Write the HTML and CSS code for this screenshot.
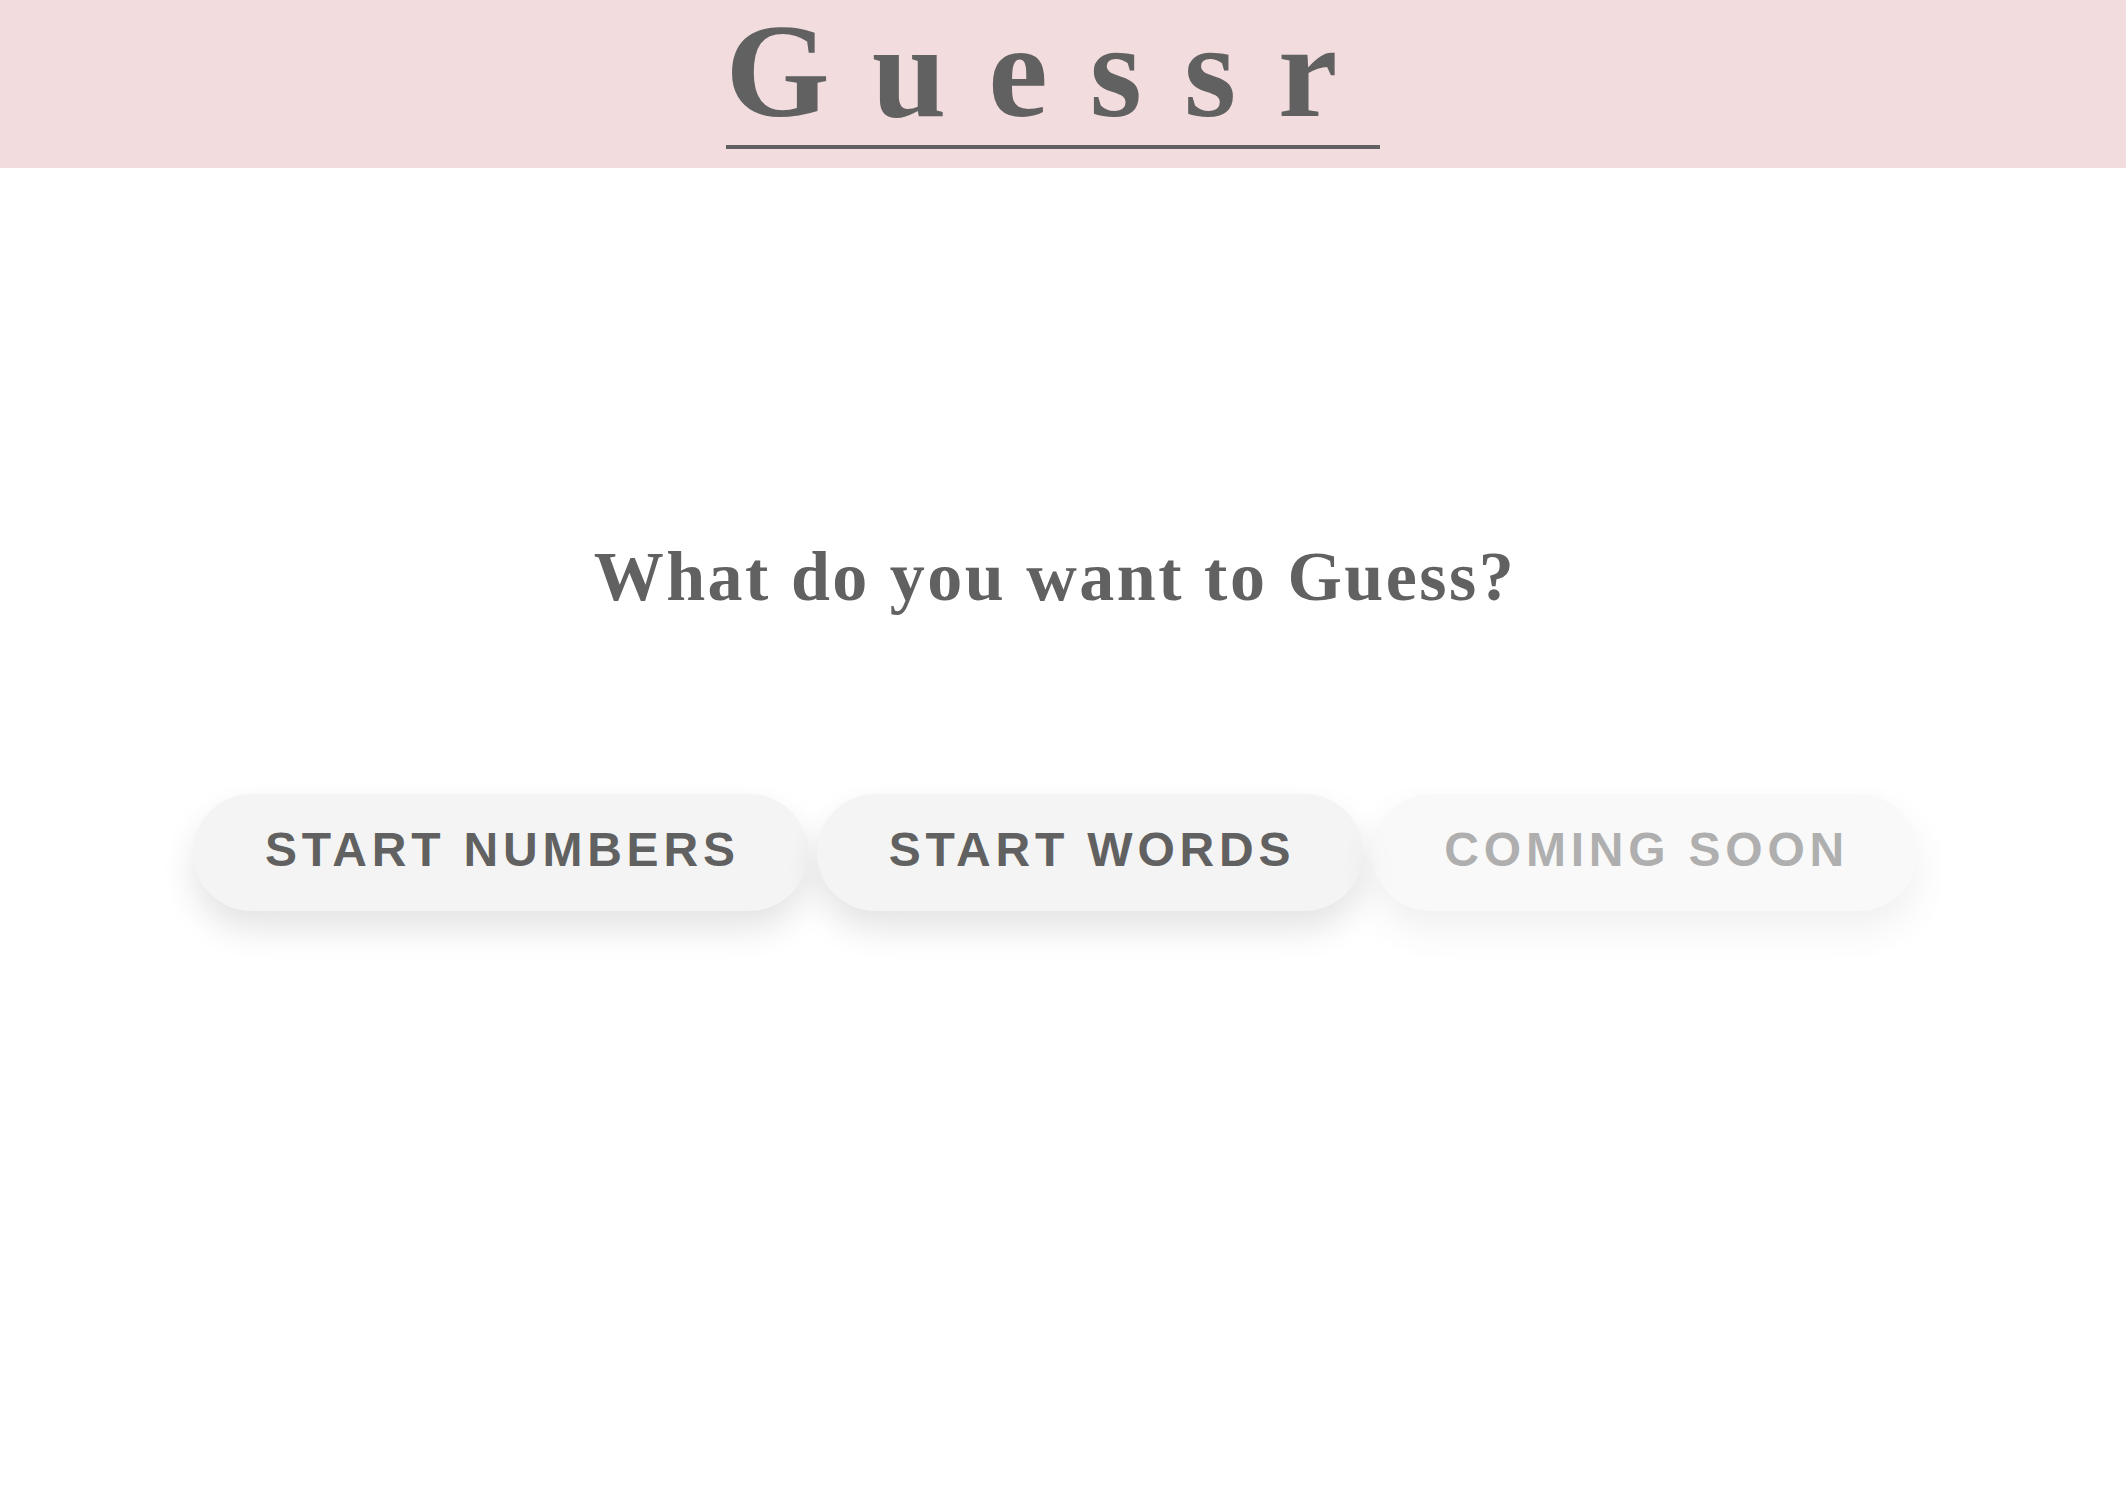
FILE: index.html
```html
<!DOCTYPE html>
<html lang="en">
<head>
<meta charset="utf-8">
<title>Guessr</title>
<link rel="stylesheet" href="styles.css">
</head>
<body>
<header class="site-header">
  <h1 class="logo">Guessr</h1>
</header>
<main class="menu">
  <h2 class="menu-title">What do you want to Guess?</h2>
  <div class="menu-buttons">
    <button class="btn">Start Numbers</button>
    <button class="btn">Start Words</button>
    <button class="btn btn-disabled" disabled>Coming Soon</button>
  </div>
</main>
</body>
</html>
```
FILE: styles.css
```css
html {
  background: #ffffff;
}

body {
  margin: 0;
  padding: 0;
  min-height: 100vh;
  color: #616161;
  font-family: "Liberation Serif", "Times New Roman", serif;
}

.site-header {
  background: #f3dcdd;
  height: 168px;
  box-sizing: border-box;
  padding: 4px 21px 0 0;
  display: flex;
  justify-content: center;
  align-items: flex-start;
}

.logo {
  margin: 0;
  padding: 0 0 7px 0;
  font-family: "Liberation Serif", "Times New Roman", serif;
  font-weight: bold;
  font-size: 134px;
  line-height: 134px;
  letter-spacing: 42px;
  color: #616161;
  border-bottom: 4px solid #616161;
}

.menu {
  padding: 369px 16px 80px 0;
  display: flex;
  flex-direction: column;
  align-items: center;
}

.menu-title {
  margin: 0;
  font-family: "Liberation Serif", "Times New Roman", serif;
  font-weight: bold;
  font-size: 70px;
  letter-spacing: 2.5px;
  line-height: normal;
  color: #616161;
}

.menu-buttons {
  margin-top: 177px;
  display: flex;
  gap: 9px;
  justify-content: center;
}

.btn {
  font-family: "Liberation Sans", Arial, sans-serif;
  font-weight: bold;
  font-size: 48px;
  letter-spacing: 4.8px;
  text-transform: uppercase;
  color: #616161;
  background: #f4f4f4;
  border: none;
  border-radius: 60px;
  padding: 28px 68px 34px 72px;
  line-height: normal;
  box-shadow: 0 18px 34px rgba(0, 0, 0, 0.11);
  cursor: pointer;
}

.btn-disabled {
  opacity: 0.5;
  cursor: default;
}
```
